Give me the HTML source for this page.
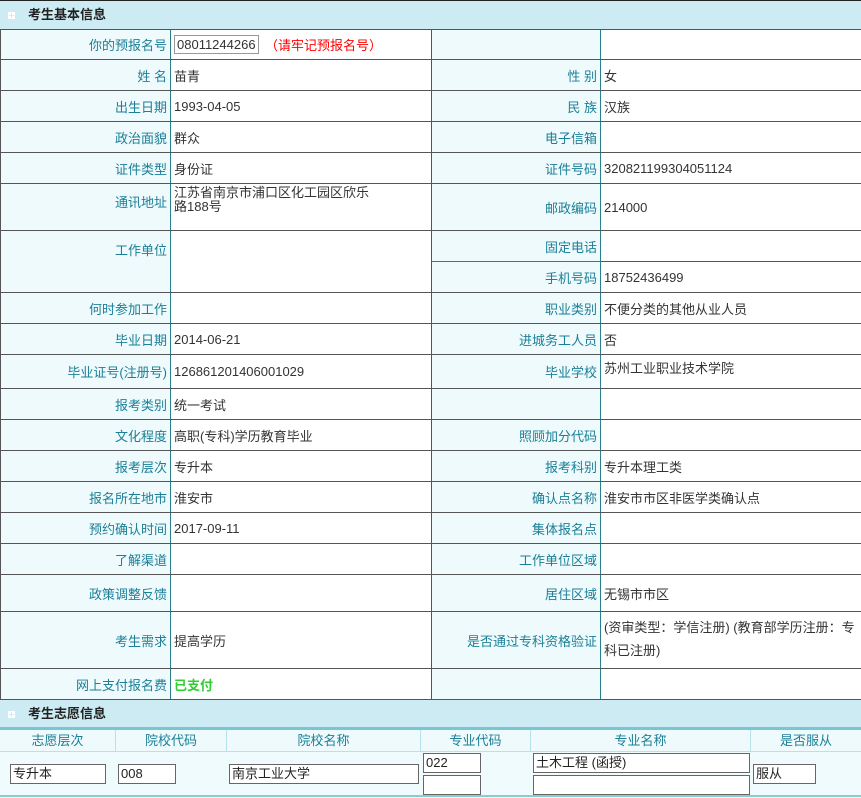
<!DOCTYPE html>
<html><head><meta charset="utf-8"><style>
*{box-sizing:border-box;margin:0;padding:0}
body{width:861px;height:798px;overflow:hidden;background:#fff;font-family:"Liberation Sans","Noto Sans CJK SC",sans-serif;font-size:13px;color:#333}
.hd{height:29px;background:#cdebf2;border-top:1px solid #222;position:relative;font-weight:bold;font-size:13px;color:#222;line-height:28px;padding-left:28px}
.hd i{position:absolute;left:8px;top:11px;width:7px;height:7px;background:#fff;}
.hd i:before{content:"";position:absolute;left:3px;top:1px;width:1px;height:5px;background:#cdebf2}
.hd i:after{content:"";position:absolute;left:1px;top:3px;width:5px;height:1px;background:#cdebf2}
.r{display:grid;grid-template-columns:171px 260px 170px 260px;border-bottom:1px solid #555;}
.r:first-of-type{border-top:1px solid #555}
.l{background:#eefafc;border-left:1px solid #555;border-right:1px solid #2a7f8c;color:#1b7f97;text-align:right;padding-right:3px;display:flex;align-items:center;justify-content:flex-end}
.v{display:flex;align-items:center;padding-left:3px}
.t{align-items:flex-start;padding-top:6px}
.box{border:1px solid #999;height:19px;line-height:17px;padding:0 2px;background:#fff;font-size:13px}
#t2{position:absolute;left:0;top:700px;width:861px}
.ch{display:flex;height:25px;border-top:3px solid #79c6d3;background:#eefafc;color:#1b7f97;border-bottom:1px solid #b8e2ea}
.ch div{border-right:1px solid #b8e2ea;text-align:center;line-height:21px}
.dr{position:relative;height:45px;background:#f0fbfd;border-bottom:2px solid #8ccad6}
.ib{position:absolute;height:20px;border:1px solid #666;background:#fff;font-size:13px;line-height:18px;padding-left:2px;color:#222}
</style></head><body>
<div class="hd"><i></i>考生基本信息</div>
<div>
<div class="r" style="height:31px"><div class="l">你的预报名号</div><div class="v"><span class="box" style="width:85px;color:#333">08011244266</span><span style="color:#f00;margin-left:6px">（请牢记预报名号）</span></div><div class="l"></div><div class="v"></div></div>
<div class="r" style="height:31px"><div class="l">姓 名</div><div class="v">苗青</div><div class="l">性 别</div><div class="v">女</div></div>
<div class="r" style="height:31px"><div class="l">出生日期</div><div class="v">1993-04-05</div><div class="l">民 族</div><div class="v">汉族</div></div>
<div class="r" style="height:31px"><div class="l">政治面貌</div><div class="v">群众</div><div class="l">电子信箱</div><div class="v"></div></div>
<div class="r" style="height:31px"><div class="l">证件类型</div><div class="v">身份证</div><div class="l">证件号码</div><div class="v">320821199304051124</div></div>
<div class="r" style="height:47px"><div class="l t" style="padding-top:8px">通讯地址</div><div class="v t" style="padding-top:2px;line-height:14px;display:block">江苏省南京市浦口区化工园区欣乐<br>路188号</div><div class="l">邮政编码</div><div class="v">214000</div></div>
<div class="r" style="height:62px"><div class="l t" style="padding-top:9px">工作单位</div><div class="v"></div>
<div style="grid-column:3/5;display:grid;grid-template-columns:170px 260px;grid-template-rows:31px 30px"><div class="l" style="border-bottom:1px solid #2a7f8c">固定电话</div><div class="v" style="border-bottom:1px solid #555"></div><div class="l">手机号码</div><div class="v">18752436499</div></div></div>
<div class="r" style="height:31px"><div class="l">何时参加工作</div><div class="v"></div><div class="l">职业类别</div><div class="v">不便分类的其他从业人员</div></div>
<div class="r" style="height:31px"><div class="l">毕业日期</div><div class="v">2014-06-21</div><div class="l">进城务工人员</div><div class="v">否</div></div>
<div class="r" style="height:34px"><div class="l">毕业证号(注册号)</div><div class="v">126861201406001029</div><div class="l">毕业学校</div><div class="v t" style="padding-top:3px">苏州工业职业技术学院</div></div>
<div class="r" style="height:31px"><div class="l">报考类别</div><div class="v">统一考试</div><div class="l"></div><div class="v"></div></div>
<div class="r" style="height:31px"><div class="l">文化程度</div><div class="v">高职(专科)学历教育毕业</div><div class="l">照顾加分代码</div><div class="v"></div></div>
<div class="r" style="height:31px"><div class="l">报考层次</div><div class="v">专升本</div><div class="l">报考科别</div><div class="v">专升本理工类</div></div>
<div class="r" style="height:31px"><div class="l">报名所在地市</div><div class="v">淮安市</div><div class="l">确认点名称</div><div class="v">淮安市市区非医学类确认点</div></div>
<div class="r" style="height:31px"><div class="l">预约确认时间</div><div class="v">2017-09-11</div><div class="l">集体报名点</div><div class="v"></div></div>
<div class="r" style="height:31px"><div class="l">了解渠道</div><div class="v"></div><div class="l">工作单位区域</div><div class="v"></div></div>
<div class="r" style="height:37px"><div class="l">政策调整反馈</div><div class="v"></div><div class="l">居住区域</div><div class="v">无锡市市区</div></div>
<div class="r" style="height:57px"><div class="l">考生需求</div><div class="v">提高学历</div><div class="l">是否通过专科资格验证</div><div class="v" style="line-height:23px;display:block;padding-top:4px;padding-right:6px">(资审类型：学信注册) (教育部学历注册：专科已注册)</div></div>
<div class="r" style="height:31px"><div class="l">网上支付报名费</div><div class="v" style="color:#3c3;font-weight:bold">已支付</div><div class="l"></div><div class="v"></div></div>
</div>
<div id="t2">
<div class="hd" style="border-top:none;height:27px;line-height:27px"><i></i>考生志愿信息</div>
<div class="ch"><div style="width:116px">志愿层次</div><div style="width:111px">院校代码</div><div style="width:194px">院校名称</div><div style="width:110px">专业代码</div><div style="width:220px">专业名称</div><div style="width:110px;border:none">是否服从</div></div>
<div class="dr">
<div class="ib" style="left:10px;top:12px;width:96px">专升本</div>
<div class="ib" style="left:118px;top:12px;width:58px">008</div>
<div class="ib" style="left:229px;top:12px;width:190px">南京工业大学</div>
<div class="ib" style="left:423px;top:1px;width:58px">022</div>
<div class="ib" style="left:423px;top:23px;width:58px"></div>
<div class="ib" style="left:533px;top:1px;width:217px">土木工程 (函授)</div>
<div class="ib" style="left:533px;top:23px;width:217px"></div>
<div class="ib" style="left:753px;top:12px;width:63px">服从</div>
</div>
</div>
</body></html>
